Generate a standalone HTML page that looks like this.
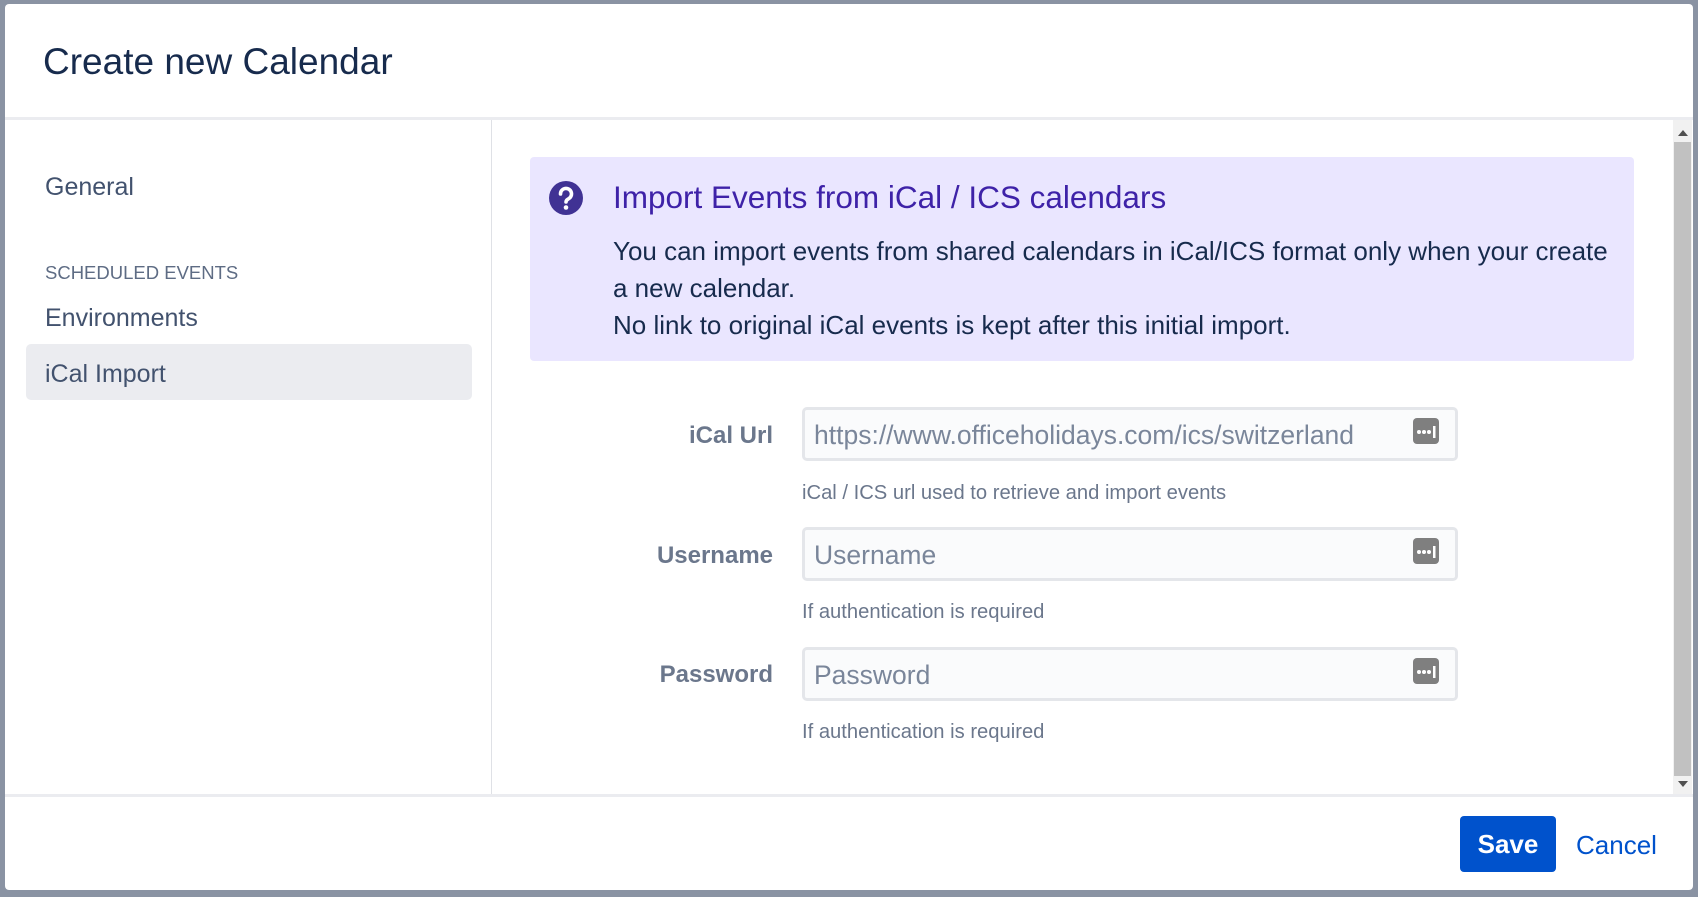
<!DOCTYPE html>
<html><head><meta charset="utf-8"><style>
*{box-sizing:border-box;margin:0;padding:0}
body{width:1698px;height:897px;background:#8a93a3;font-family:"Liberation Sans",sans-serif;position:relative;overflow:hidden;color:#172b4d}
.modal{position:absolute;left:5px;top:4px;width:1688px;height:886px;background:#fff;border-radius:4px;overflow:hidden}
.abs{position:absolute;white-space:nowrap}
.title{left:38px;top:36px;font-size:37px;color:#172b4d;line-height:44px}
.hb{left:0;top:113px;width:1688px;height:3px;background:#ebecf0}
.side{left:0;top:116px;width:487px;height:674px;border-right:1px solid #dfe1e6}
.nav{font-size:25px;color:#42526e;line-height:30px}
.sel{left:21px;top:340px;width:446px;height:56px;background:#ebecf0;border-radius:5px}
.info{left:525px;top:153px;width:1104px;height:204px;background:#eae6ff;border-radius:4px}
.lbl{font-size:24px;font-weight:bold;color:#6b778c;text-align:right;width:300px;line-height:30px}
.inp{left:797px;width:656px;height:54px;background:#fafbfc;border:3px solid #e4e6ea;border-radius:5px;font-size:26.5px;color:#7a869a;padding:10px 0 0 9px}
.ico{position:absolute;right:16px;top:8px;width:26px;height:26px;background:#7f7f7f;border-radius:4px}
.help{left:797px;font-size:20.2px;color:#6b778c}
.fb{left:0;top:790px;width:1688px;height:3px;background:#ebecf0}
</style></head><body>
<div class="modal">
<div class="abs title">Create new Calendar</div>
<div class="abs hb"></div>
<div class="abs side"></div>
<div class="abs nav" style="left:40px;top:168px">General</div>
<div class="abs" style="left:40px;top:258px;font-size:18.5px;color:#5e6c84">SCHEDULED EVENTS</div>
<div class="abs nav" style="left:40px;top:299px">Environments</div>
<div class="abs sel"></div>
<div class="abs nav" style="left:40px;top:355px;color:#42526e">iCal Import</div>

<div class="abs info"></div>
<svg class="abs" style="left:543px;top:176px" width="36" height="36" viewBox="0 0 36 36"><circle cx="18" cy="18" r="17" fill="#403294"/><path d="M12.5 14a5.5 5.5 0 1 1 8 4.8c-1.6.9-2.5 1.6-2.5 3.2" fill="none" stroke="#fff" stroke-width="3.6" stroke-linecap="round"/><circle cx="18" cy="27.5" r="2.3" fill="#fff"/></svg>
<div class="abs" style="left:608px;top:175px;font-size:31.5px;color:#3e22a8;line-height:36px">Import Events from iCal / ICS calendars</div>
<div class="abs" style="left:608px;top:229px;font-size:26px;line-height:37px;color:#172b4d">You can import events from shared calendars in iCal/ICS format only when your create<br>a new calendar.<br>No link to original iCal events is kept after this initial import.</div>

<div class="abs lbl" style="left:468px;top:417px">iCal Url</div>
<div class="abs inp" style="top:403px">https://www.officeholidays.com/ics/switzerland<div class="ico"><svg width="26" height="26"><circle cx="6" cy="14" r="2" fill="#fff"/><circle cx="11" cy="14" r="2" fill="#fff"/><circle cx="16" cy="14" r="2" fill="#fff"/><rect x="20" y="8" width="2.5" height="12" fill="#fff"/></svg></div></div>
<div class="abs help" style="top:478px">iCal / ICS url used to retrieve and import events</div>

<div class="abs lbl" style="left:468px;top:537px">Username</div>
<div class="abs inp" style="top:523px">Username<div class="ico"><svg width="26" height="26"><circle cx="6" cy="14" r="2" fill="#fff"/><circle cx="11" cy="14" r="2" fill="#fff"/><circle cx="16" cy="14" r="2" fill="#fff"/><rect x="20" y="8" width="2.5" height="12" fill="#fff"/></svg></div></div>
<div class="abs help" style="top:597px">If authentication is required</div>

<div class="abs lbl" style="left:468px;top:656px">Password</div>
<div class="abs inp" style="top:643px">Password<div class="ico"><svg width="26" height="26"><circle cx="6" cy="14" r="2" fill="#fff"/><circle cx="11" cy="14" r="2" fill="#fff"/><circle cx="16" cy="14" r="2" fill="#fff"/><rect x="20" y="8" width="2.5" height="12" fill="#fff"/></svg></div></div>
<div class="abs help" style="top:717px">If authentication is required</div>

<div class="abs" style="left:1668px;top:116px;width:19px;height:674px;background:#f1f1f1"></div>
<div class="abs" style="left:1669px;top:138px;width:17px;height:634px;background:#c1c1c1"></div>
<div class="abs" style="left:1673px;top:126px;width:0;height:0;border-left:5px solid transparent;border-right:5px solid transparent;border-bottom:6px solid #505050"></div>
<div class="abs" style="left:1673px;top:777px;width:0;height:0;border-left:5px solid transparent;border-right:5px solid transparent;border-top:6px solid #505050"></div>

<div class="abs fb"></div>
<div class="abs" style="left:1455px;top:812px;width:96px;height:56px;background:#0052cc;border-radius:4px;color:#fff;font-size:26px;font-weight:bold;text-align:center;line-height:56px">Save</div>
<div class="abs" style="left:1571px;top:826px;font-size:26px;color:#0052cc;line-height:30px">Cancel</div>
</div>
</body></html>
